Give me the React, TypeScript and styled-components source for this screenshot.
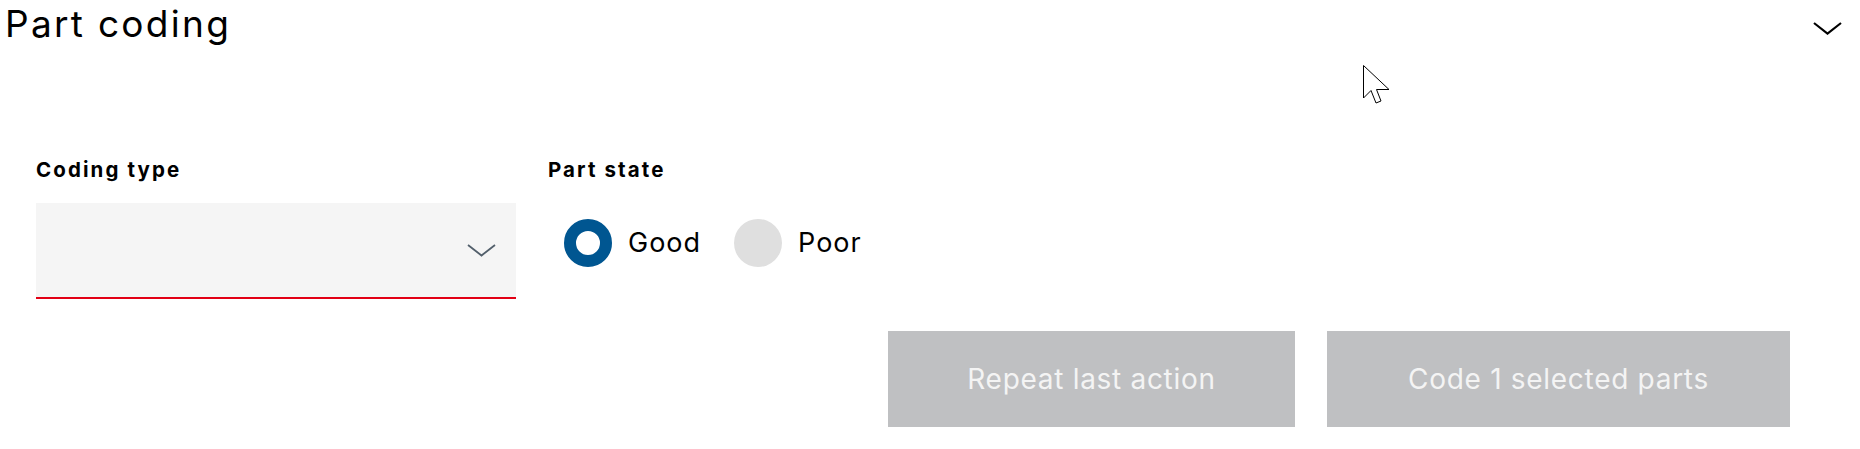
import React, { useState } from 'react';
import styled, { createGlobalStyle } from 'styled-components';

const GlobalStyle = createGlobalStyle`
  html, body {
    margin: 0;
    padding: 0;
    background: #ffffff;
  }
  body {
    font-family: Inter, "Liberation Sans", sans-serif;
    color: #000000;
  }
`;

const Panel = styled.section`
  position: relative;
  width: 1860px;
  height: 449px;
  overflow: hidden;
  background: #ffffff;
`;

const Header = styled.header`
  display: flex;
  justify-content: space-between;
  align-items: flex-start;
  padding: 0 18px 0 5px;
  height: 56px;
`;

const Title = styled.h1`
  margin: 0;
  font-size: 37px;
  line-height: 48px;
  font-weight: 400;
  letter-spacing: 2.3px;
`;

const Toggle = styled.button`
  display: flex;
  border: 0;
  padding: 0;
  margin-top: 22px;
  background: transparent;
  cursor: pointer;
`;

const Content = styled.div`
  padding: 102px 70px 0 36px;
`;

const Fields = styled.div`
  display: flex;
  gap: 32px;
`;

const Field = styled.div<{ $width?: number }>`
  display: flex;
  flex-direction: column;
  width: ${(p) => (p.$width ? `${p.$width}px` : 'auto')};
`;

const Label = styled.label`
  font-size: 20.5px;
  line-height: 24px;
  font-weight: 700;
  letter-spacing: 2.1px;
  margin-bottom: 21px;
`;

const Select = styled.div`
  display: flex;
  align-items: center;
  justify-content: flex-end;
  height: 94px;
  padding-right: 20px;
  background: #f5f5f5;
  border-bottom: 2px solid #e20015;
`;

const RadioGroup = styled.div`
  display: flex;
  align-items: center;
  gap: 33px;
  margin-top: 16px;
  padding-left: 16px;
`;

const RadioOption = styled.label`
  display: flex;
  align-items: center;
  gap: 16px;
  font-size: 27px;
  line-height: 48px;
  letter-spacing: 1px;
  cursor: pointer;
`;

const RadioDot = styled.span<{ $checked: boolean }>`
  box-sizing: border-box;
  width: 48px;
  height: 48px;
  border-radius: 50%;
  background: ${(p) => (p.$checked ? '#ffffff' : '#dfdfdf')};
  border: ${(p) => (p.$checked ? '12px solid #005691' : '0')};
`;

const Actions = styled.div`
  display: flex;
  justify-content: flex-end;
  gap: 32px;
  margin-top: 32px;
`;

const ActionButton = styled.button<{ $width: number }>`
  width: ${(p) => p.$width}px;
  height: 96px;
  border: 0;
  background: #bfc0c2;
  color: #f4f4f4;
  font-family: Inter, "Liberation Sans", sans-serif;
  font-size: 28px;
  letter-spacing: 0.7px;
  cursor: not-allowed;
`;

const Cursor = styled.svg`
  position: absolute;
  left: 1363px;
  top: 65px;
`;

const Chevron = ({ color, width }: { color: string; width: number }) => (
  <svg width="29" height="13" viewBox="0 0 29 13" fill="none">
    <path d="M1 1 L14.5 11.5 L28 1" stroke={color} strokeWidth={width} />
  </svg>
);

export default function App() {
  const [state, setState] = useState('good');

  return (
    <Panel>
      <GlobalStyle />
      <Header>
        <Title>Part coding</Title>
        <Toggle aria-label="Collapse">
          <Chevron color="#000000" width={2.2} />
        </Toggle>
      </Header>
      <Content>
        <Fields>
          <Field $width={480}>
            <Label>Coding type</Label>
            <Select>
              <Chevron color="#525f6b" width={1.8} />
            </Select>
          </Field>
          <Field>
            <Label>Part state</Label>
            <RadioGroup>
              <RadioOption onClick={() => setState('good')}>
                <RadioDot $checked={state === 'good'} />
                Good
              </RadioOption>
              <RadioOption onClick={() => setState('poor')}>
                <RadioDot $checked={state === 'poor'} />
                Poor
              </RadioOption>
            </RadioGroup>
          </Field>
        </Fields>
        <Actions>
          <ActionButton $width={407} disabled>
            Repeat last action
          </ActionButton>
          <ActionButton $width={463} disabled>
            Code 1 selected parts
          </ActionButton>
        </Actions>
      </Content>
      <Cursor width="30" height="42" viewBox="0 0 30 42">
        <path
          d="M0.5 0.5 L0.5 33 L8 25.5 L13 38 L18 36 L13.5 24.5 L26 24.5 Z"
          fill="#ffffff"
          stroke="#000000"
          strokeWidth="1"
        />
      </Cursor>
    </Panel>
  );
}
